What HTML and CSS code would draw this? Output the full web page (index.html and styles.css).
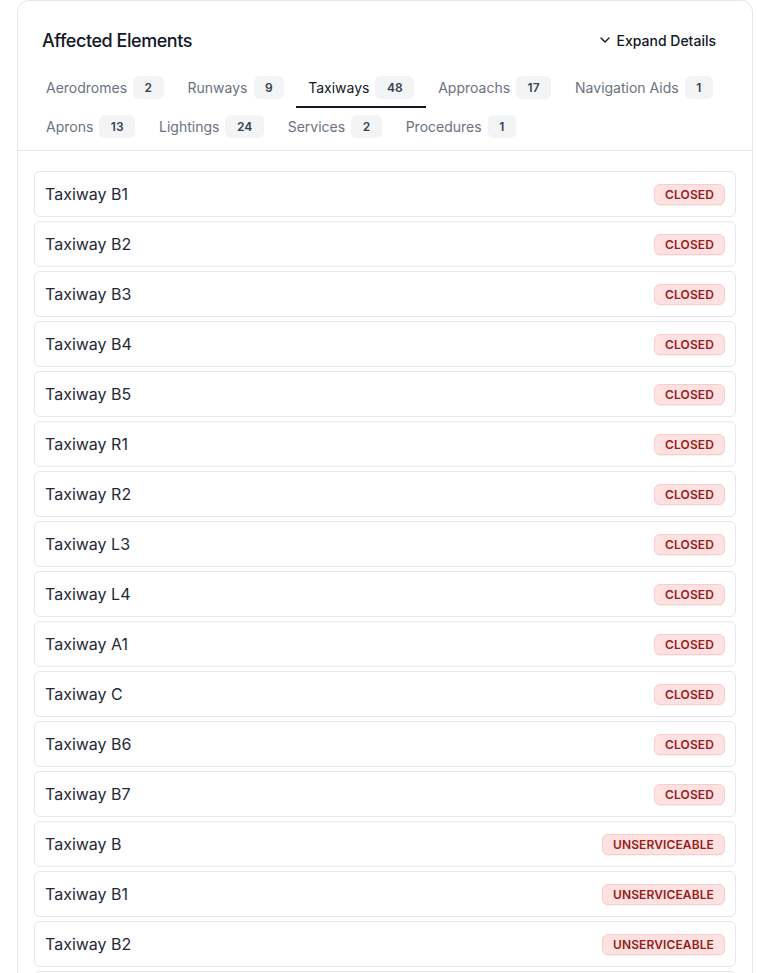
FILE: index.html
```html
<!DOCTYPE html>
<html lang="en">
<head>
    <meta charset="UTF-8">
    <meta name="viewport" content="width=device-width, initial-scale=1.0">
    <title>Affected Elements</title>
    <link rel="stylesheet" href="styles.css">
</head>
<body>
    <div class="card">
        <div class="card-header">
            <div class="header-top">
                <h2>Affected Elements</h2>
                <button class="expand-btn" type="button">
                    <svg width="16" height="16" viewBox="0 0 24 24" fill="none" stroke="currentColor" stroke-width="2" stroke-linecap="round" stroke-linejoin="round"><path d="M6 9l6 6 6-6"/></svg>
                    Expand Details
                </button>
            </div>
            <div class="tabs">
                <div class="tab">Aerodromes <span class="count">2</span></div>
                <div class="tab">Runways <span class="count">9</span></div>
                <div class="tab active">Taxiways <span class="count">48</span></div>
                <div class="tab">Approachs <span class="count">17</span></div>
                <div class="tab">Navigation Aids <span class="count">1</span></div>
                <div class="tab">Aprons <span class="count">13</span></div>
                <div class="tab">Lightings <span class="count">24</span></div>
                <div class="tab">Services <span class="count">2</span></div>
                <div class="tab">Procedures <span class="count">1</span></div>
            </div>
        </div>

        <ul class="element-list">
            <li class="element"><span>Taxiway B1</span><span class="status">Closed</span></li>
            <li class="element"><span>Taxiway B2</span><span class="status">Closed</span></li>
            <li class="element"><span>Taxiway B3</span><span class="status">Closed</span></li>
            <li class="element"><span>Taxiway B4</span><span class="status">Closed</span></li>
            <li class="element"><span>Taxiway B5</span><span class="status">Closed</span></li>
            <li class="element"><span>Taxiway R1</span><span class="status">Closed</span></li>
            <li class="element"><span>Taxiway R2</span><span class="status">Closed</span></li>
            <li class="element"><span>Taxiway L3</span><span class="status">Closed</span></li>
            <li class="element"><span>Taxiway L4</span><span class="status">Closed</span></li>
            <li class="element"><span>Taxiway A1</span><span class="status">Closed</span></li>
            <li class="element"><span>Taxiway C</span><span class="status">Closed</span></li>
            <li class="element"><span>Taxiway B6</span><span class="status">Closed</span></li>
            <li class="element"><span>Taxiway B7</span><span class="status">Closed</span></li>
            <li class="element"><span>Taxiway B</span><span class="status">Unserviceable</span></li>
            <li class="element"><span>Taxiway B1</span><span class="status">Unserviceable</span></li>
            <li class="element"><span>Taxiway B2</span><span class="status">Unserviceable</span></li>
            <li class="element"><span>Taxiway B3</span><span class="status">Unserviceable</span></li>
        </ul>
    </div>
</body>
</html>
```

FILE: styles.css
```css
body {
    font-family: Inter, "Noto Sans", sans-serif;
    background-color: #fff;
    color: #111827;
    margin: 0;
    padding: 0;
}

.card {
    width: 734px;
    margin-left: 17px;
    border: 1px solid #e5e7eb;
    border-radius: 12px;
    background-color: #fff;
}

.card-header {
    padding: 23px 16px 3px;
    border-bottom: 1px solid #e5e7eb;
}

.header-top {
    display: flex;
    align-items: center;
    justify-content: space-between;
    height: 32px;
    padding: 0 8px;
    margin-bottom: 13px;
}

h2 {
    margin: 0;
    font-size: 18px;
    font-weight: 500;
    letter-spacing: -0.025em;
    color: #111827;
}

.expand-btn {
    display: flex;
    align-items: center;
    gap: 4px;
    height: 32px;
    padding: 0 12px;
    border: none;
    background: none;
    font-family: inherit;
    font-size: 14px;
    font-weight: 500;
    color: #111827;
    cursor: pointer;
}

.tabs {
    display: flex;
    flex-wrap: wrap;
}

.tab {
    display: flex;
    align-items: center;
    gap: 6px;
    padding: 7px 12px 8px;
    border-bottom: 2px solid transparent;
    font-size: 14px;
    color: #6b7280;
    cursor: pointer;
}

.tab.active {
    color: #111827;
    border-bottom-color: #111827;
}

.count {
    display: inline-flex;
    align-items: center;
    height: 22px;
    padding: 0 11.5px;
    border-radius: 6px;
    background-color: #f3f4f6;
    box-shadow: 0 1px 1px rgba(0, 0, 0, 0.05);
    font-size: 12px;
    font-weight: 600;
    color: #374151;
}

.element-list {
    list-style: none;
    margin: 0;
    padding: 20px 16px;
    display: flex;
    flex-direction: column;
    gap: 4px;
}

.element {
    display: flex;
    align-items: center;
    justify-content: space-between;
    height: 44px;
    padding: 0 10px;
    border: 1px solid #e5e7eb;
    border-radius: 6px;
    font-size: 16px;
    color: #1f2937;
}

.status {
    display: inline-flex;
    align-items: center;
    height: 19px;
    padding: 0 10px;
    border: 1px solid #fecaca;
    border-radius: 6px;
    background-color: #fee2e2;
    box-shadow: 0 1px 1px rgba(0, 0, 0, 0.05);
    font-size: 12px;
    font-weight: 600;
    letter-spacing: 0.01em;
    text-transform: uppercase;
    color: #991b1b;
}
```
